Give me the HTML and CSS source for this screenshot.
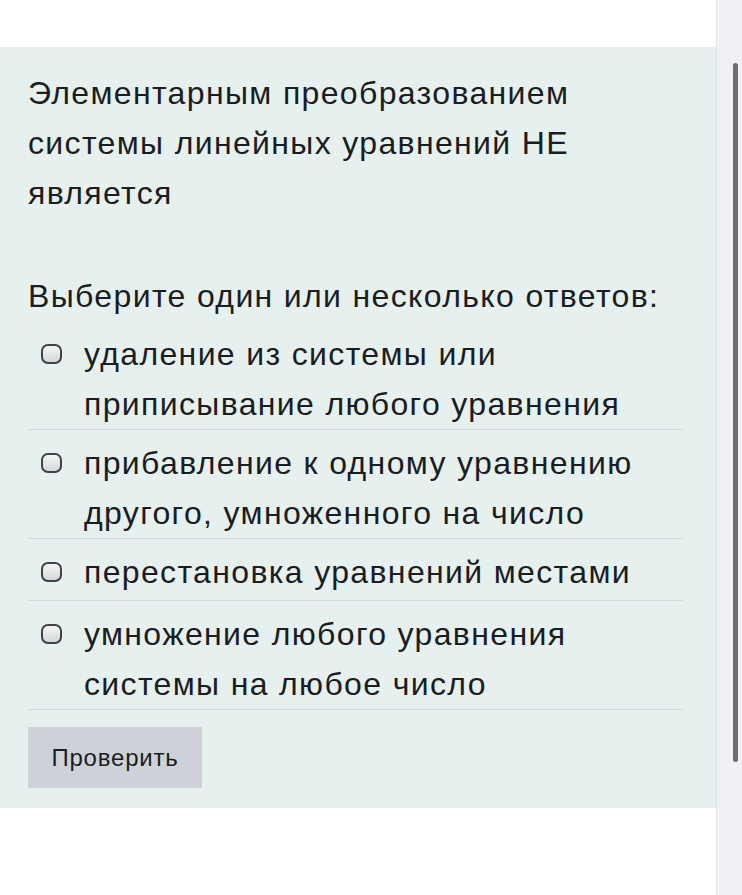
FILE: index.html
```html
<!DOCTYPE html>
<html lang="ru">
<head>
<meta charset="utf-8">
<title>Вопрос</title>
<link rel="stylesheet" href="styles.css">
</head>
<body>
<div class="page">
  <main class="main">
    <div class="top-space"></div>
    <section class="formulation">
      <p class="qtext">Элементарным преобразованием системы линейных уравнений НЕ является</p>
      <div class="prompt">Выберите один или несколько ответов:</div>
      <div class="answers">
        <label class="option"><span class="radio"></span><span class="otext">удаление из системы или приписывание любого уравнения</span></label>
        <label class="option"><span class="radio"></span><span class="otext">прибавление к одному уравнению другого, умноженного на число</span></label>
        <label class="option"><span class="radio"></span><span class="otext">перестановка уравнений местами</span></label>
        <label class="option"><span class="radio"></span><span class="otext">умножение любого уравнения системы на любое число</span></label>
      </div>
      <button class="check" type="button">Проверить</button>
    </section>
  </main>
  <aside class="scrollbar"><div class="thumb"></div></aside>
</div>
</body>
</html>
```
FILE: styles.css
```css
html, body {
  margin: 0;
  padding: 0;
  background: #ffffff;
}
body {
  font-family: "Liberation Sans", Arial, sans-serif;
  color: #1b1d20;
}
.page {
  display: flex;
  height: 895px;
  overflow: hidden;
}
.main {
  flex: 1;
  min-width: 0;
}
.top-space {
  height: 47px;
}
.formulation {
  background: #e5f0ef;
  padding: 21px 33px 20px 28px;
  font-size: 32px;
  line-height: 50px;
  letter-spacing: 1.35px;
}
.qtext {
  margin: 0 0 53px;
}
.prompt {
  margin: 0;
}
.answers {
  display: flex;
  flex-direction: column;
}
.option {
  display: flex;
  align-items: flex-start;
  box-sizing: border-box;
  min-height: 62px;
  padding: 8px 0 0;
  border-bottom: 1px solid #d2dbdb;
}
.radio {
  flex: none;
  box-sizing: border-box;
  width: 21px;
  height: 20px;
  margin: 15px 22px 0 13px;
  border: 2px solid #3f4246;
  border-radius: 7px;
  background: linear-gradient(#f6f6f6, #d5d6d8);
}
.otext {
  flex: 1;
}
.check {
  display: block;
  margin-top: 17px;
  height: 61px;
  width: 174px;
  padding: 0;
  border: none;
  border-radius: 0;
  background: #ced2d8;
  color: #1b1d20;
  font-family: "Liberation Sans", Arial, sans-serif;
  font-size: 24px;
  letter-spacing: 0.8px;
}
.scrollbar {
  flex: none;
  width: 26px;
  background: #eff1f4;
  border-left: 1px solid #e1e4e8;
  padding-top: 63px;
  box-sizing: border-box;
}
.thumb {
  width: 5px;
  height: 699px;
  margin-left: 16px;
  background: #6c6d72;
  border-radius: 3px;
}
```
